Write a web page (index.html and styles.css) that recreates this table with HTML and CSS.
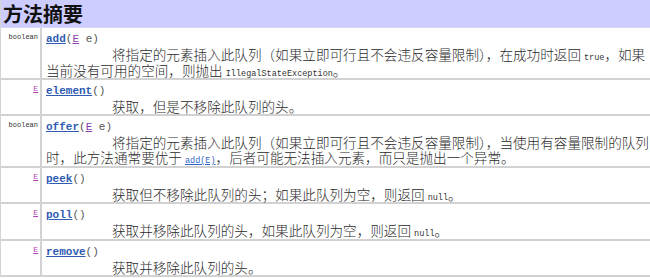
FILE: index.html
```html
<!DOCTYPE html>
<html>
<head>
<meta charset="utf-8">
<link rel="stylesheet" href="styles.css">
</head>
<body>
<div class="summary">
  <div class="title">方法摘要</div>
  <table class="methods">
    <tr>
      <td class="type"><code>boolean</code></td>
      <td class="detail">
        <div class="sig"><a class="name">add</a>(<a class="tp">E</a> e)</div>
        <div class="desc">将指定的元素插入此队列（如果立即可行且不会违反容量限制），在成功时返回 <code class="c">true</code>，如果当前没有可用的空间，则抛出 <code class="c">IllegalStateException</code>。</div>
      </td>
    </tr>
    <tr>
      <td class="type"><a class="tp tpl">E</a></td>
      <td class="detail">
        <div class="sig"><a class="name">element</a>()</div>
        <div class="desc">获取，但是不移除此队列的头。</div>
      </td>
    </tr>
    <tr>
      <td class="type"><code>boolean</code></td>
      <td class="detail">
        <div class="sig"><a class="name">offer</a>(<a class="tp">E</a> e)</div>
        <div class="desc">将指定的元素插入此队列（如果立即可行且不会违反容量限制），当使用有容量限制的队列时，此方法通常要优于 <a class="ref"><code class="c">add(E)</code></a>，后者可能无法插入元素，而只是抛出一个异常。</div>
      </td>
    </tr>
    <tr>
      <td class="type"><a class="tp tpl">E</a></td>
      <td class="detail">
        <div class="sig"><a class="name">peek</a>()</div>
        <div class="desc">获取但不移除此队列的头；如果此队列为空，则返回 <code class="c">null</code>。</div>
      </td>
    </tr>
    <tr>
      <td class="type"><a class="tp tpl">E</a></td>
      <td class="detail">
        <div class="sig"><a class="name">poll</a>()</div>
        <div class="desc">获取并移除此队列的头，如果此队列为空，则返回 <code class="c">null</code>。</div>
      </td>
    </tr>
    <tr>
      <td class="type"><a class="tp tpl">E</a></td>
      <td class="detail">
        <div class="sig"><a class="name">remove</a>()</div>
        <div class="desc">获取并移除此队列的头。</div>
      </td>
    </tr>
  </table>
</div>
</body>
</html>
```
FILE: styles.css
```css
html, body {
  margin: 0;
  padding: 0;
  background: #ffffff;
}
body {
  font-family: "Noto Sans CJK SC", "Liberation Sans", sans-serif;
  color: #222;
}
.summary {
  width: 650px;
  border-left: 1px solid #d4d4d4;
  box-sizing: border-box;
}
.title {
  height: 27px;
  display: flex;
  align-items: center;
  background: #ccccff;
  font-size: 20px;
  line-height: 1;
  font-weight: bold;
  padding-left: 2px;
  color: #111;
  border-bottom: 1px solid #d8d8e8;
}
.methods {
  width: 100%;
  border-collapse: collapse;
}
.methods td {
  vertical-align: top;
  border-bottom: 2px solid #d2d2d2;
  padding: 4px 0 0 0;
  line-height: 15px;
}
.type {
  width: 37px;
  text-align: right;
  padding-right: 2px !important;
  padding-top: 3px !important;
  border-right: 2px solid #d2d2d2;
}
.type code, .type a {
  display: block;
  line-height: 12px;
}
.type code {
  font-family: "Liberation Mono", monospace;
  font-size: 7px;
  color: #333;
}
.detail {
  padding-left: 4px !important;
  font-size: 14px;
}
.sig {
  font-family: "Liberation Mono", monospace;
  font-size: 11px;
  height: 15px;
  line-height: 15px;
  color: #555;
}
.name {
  color: #2f5bb3;
  font-weight: bold;
  text-decoration: underline;
}
.tp {
  color: #8a3fa8;
  text-decoration: underline;
}
.tpl {
  font-family: "Liberation Mono", monospace;
  font-size: 8px;
  color: #b040b0;
}
.desc {
  text-indent: 66px;
  font-size: 13.6px;
  font-weight: 300;
  line-height: 15px;
  color: #2a2a2a;
}
.c {
  font-family: "Liberation Mono", monospace;
  font-size: 8.5px;
  font-weight: normal;
  line-height: 1;
  color: #333;
}
.ref {
  color: #3366cc;
  text-decoration: underline;
  line-height: 1;
}
.ref .c {
  color: #3366cc;
}
```
